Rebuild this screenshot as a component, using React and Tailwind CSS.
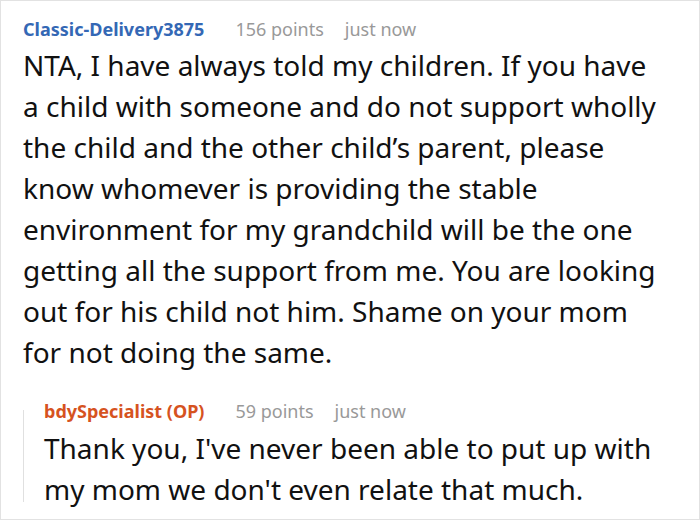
import React from "react";

const font = { fontFamily: '"Noto Sans", sans-serif' };

const Meta = ({ name, nameClass, points }) => (
  <div className="flex items-baseline text-[18px] leading-[24px] whitespace-nowrap">
    <span className={"font-bold " + nameClass}>{name}</span>
    <span className="ml-[31px] text-[#999999]">{points} points</span>
    <span className="ml-[21px] text-[#999999]">just now</span>
  </div>
);

const App = () => {
  return (
    <div className="w-[700px] h-[520px] bg-white border border-[#e2e2e2] overflow-hidden" style={font}>
      <div className="pl-[22px] pr-2 pt-[16px]">
        <Meta name="Classic-Delivery3875" nameClass="text-[#3468b5]" points="156" />
        <p className="mt-[4px] text-[28px] leading-[41px] text-[#111111] whitespace-nowrap">
          NTA, I have always told my children. If you have<br />
          a child with someone and do not support wholly<br />
          the child and the other child’s parent, please<br />
          know whomever is providing the stable<br />
          environment for my grandchild will be the one<br />
          getting all the support from me. You are looking<br />
          out for his child not him. Shame on your mom<br />
          for not doing the same.
        </p>

        <div className="mt-[26px] flex">
          <div className="w-px bg-[#e0e0e0] mt-[11px] mb-[8px]" />
          <div className="pl-[20px]">
            <Meta name="bdySpecialist (OP)" nameClass="text-[#d6531f]" points="59" />
            <p className="mt-[5px] text-[28px] leading-[41px] text-[#111111] whitespace-nowrap">
              Thank you, I've never been able to put up with<br />
              my mom we don't even relate that much.
            </p>
          </div>
        </div>
      </div>
    </div>
  );
};

export default App;
